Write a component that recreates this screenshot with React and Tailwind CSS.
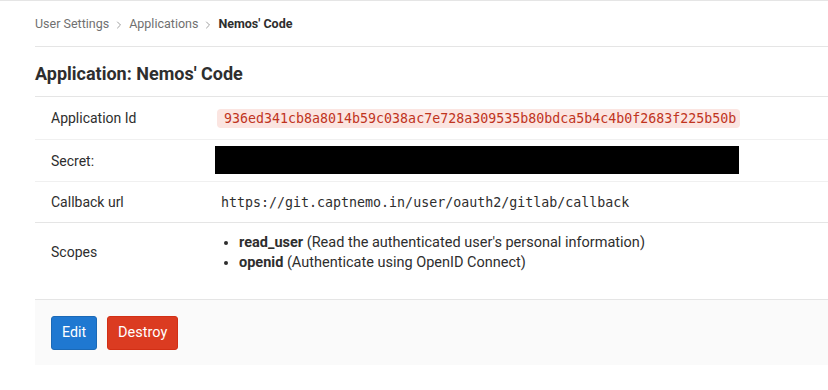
import { ChevronRight } from "lucide-react"

const appId = "936ed341cb8a8014b59c038ac7e728a309535b80bdca5b4c4b0f2683f225b50b"
const callbackUrl = "https://git.captnemo.in/user/oauth2/gitlab/callback"

const Crumb = ({ children, last }) => (
  <span className={last ? "font-bold text-[#2e2e2e]" : "text-[#707070]"}>{children}</span>
)

const Sep = () => <ChevronRight className="w-3 h-3 text-[#a0a0a0] mx-[4px]" strokeWidth={2} />

export default function App() {
  return (
    <div
      className="min-h-[390px] bg-white border-t border-[#e5e5e5] text-[14px] text-[#2e2e2e]"
      style={{ fontFamily: "Roboto, 'Noto Sans', sans-serif" }}
    >
      <div className="pl-[35px]">
        {/* Breadcrumbs */}
        <div className="h-[46px] pt-[2px] flex items-center border-b border-[#e5e5e5] text-[12.5px]">
          <Crumb>User Settings</Crumb>
          <Sep />
          <Crumb>Applications</Crumb>
          <Sep />
          <Crumb last>Nemos' Code</Crumb>
        </div>

        <h3 className="h-[50px] pt-[3px] flex items-center text-[18px] font-bold border-b border-[#e5e5e5]">
          Application: Nemos' Code
        </h3>

        <table className="w-full border-collapse">
          <tbody>
            <tr className="border-b border-[#f0f0f0] h-[42px]">
              <td className="w-[170px] pl-4 pt-[2px]">Application Id</td>
              <td className="pl-3 pt-[2px]">
                <code
                  className="bg-[#fbe5e1] text-[#c0341d] rounded pl-[7px] pr-[4px] py-[2px] text-[13.3px]"
                  style={{ fontFamily: "'DejaVu Sans Mono', monospace" }}
                >
                  {appId}
                </code>
              </td>
            </tr>
            <tr className="border-b border-[#f0f0f0] h-[42px]">
              <td className="pl-4 pt-[2px]">Secret:</td>
              <td className="pl-[10px]">
                <div className="w-[524px] h-[28px] bg-black" />
              </td>
            </tr>
            <tr className="border-b border-[#e5e5e5] h-[41px]">
              <td className="pl-4 pt-[2px]">Callback url</td>
              <td
                className="pl-4 pt-[2px] text-[13.3px]"
                style={{ fontFamily: "'DejaVu Sans Mono', monospace" }}
              >
                {callbackUrl}
              </td>
            </tr>
            <tr className="h-[77px]">
              <td className="pl-4 pb-[16px]">Scopes</td>
              <td className="pl-4 pb-[16px] align-middle">
                <ul className="list-disc pl-[18px] leading-[20px] text-[14.5px]">
                  <li>
                    <strong>read_user</strong> (Read the authenticated user's personal information)
                  </li>
                  <li>
                    <strong>openid</strong> (Authenticate using OpenID Connect)
                  </li>
                </ul>
              </td>
            </tr>
          </tbody>
        </table>

        {/* Form actions */}
        <div className="bg-[#fafafa] border-t border-[#e5e5e5] h-[66px] flex items-center gap-[10px] pl-4">
          <button className="h-[34px] px-[10px] rounded-[3px] bg-[#1f78d1] border border-[#1b69b6] text-white text-[14.2px]">
            Edit
          </button>
          <button className="h-[34px] px-[10px] rounded-[3px] bg-[#db3b21] border border-[#d22f15] text-white text-[14.5px]">
            Destroy
          </button>
        </div>
      </div>
    </div>
  )
}
